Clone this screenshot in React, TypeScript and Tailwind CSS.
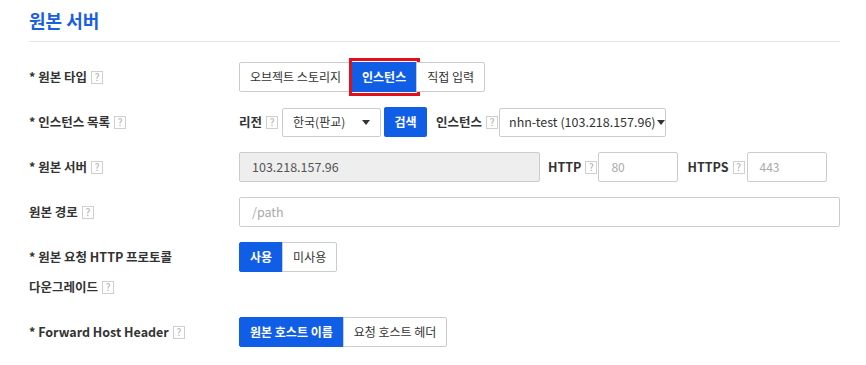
import React from "react";

const font = { fontFamily: '"Noto Sans CJK KR", "Noto Sans", sans-serif' };

function Help() {
  return (
    <span className="inline-flex items-center justify-center w-[12px] h-[13px] ml-[4px] border border-[#cfcfcf] text-[10px] leading-none text-[#aaa] font-normal bg-white">
      ?
    </span>
  );
}

function Label({ children, help = true }: { children: React.ReactNode; help?: boolean }) {
  return (
    <div className="flex items-center h-[30px] text-[12.5px] font-bold text-[#333] whitespace-nowrap">
      {children}
      {help && <Help />}
    </div>
  );
}

function Group({ items, active, outline }: { items: string[]; active: number; outline?: boolean }) {
  return (
    <div className="flex h-[30px]">
      {items.map((t, i) => (
        <div
          key={t}
          className={`relative flex items-center px-[10px] text-[12px] border whitespace-nowrap ${
            i === active
              ? "bg-[#115ee6] border-[#115ee6] text-white font-bold"
              : "bg-white border-[#ccc] text-[#333]"
          } ${i === 0 ? "rounded-l-[2px]" : "-ml-px"} ${i === items.length - 1 ? "rounded-r-[2px]" : ""}`}
        >
          {t}
          {outline && i === active && (
            <div className="absolute -top-[5px] -bottom-[5px] -left-[3px] -right-[4px] border-[3px] border-[#e3101c]" />
          )}
        </div>
      ))}
    </div>
  );
}

function Arrow() {
  return (
    <svg width="8" height="5" viewBox="0 0 8 5">
      <path d="M0 0H8L4 5Z" fill="#333" />
    </svg>
  );
}

export default function App() {
  return (
    <div className="w-[866px] h-[365px] bg-white pl-[29px] pr-[26px]" style={font}>
      <div className="h-[42px] pt-[6px] border-b border-[#e5e5e5]">
        <h2 className="text-[18px] font-bold text-[#1a5fe0] leading-[28px]">원본 서버</h2>
      </div>

      <div className="flex flex-col gap-[15px] pt-[20px]">
        <div className="flex">
          <div className="w-[210px]">
            <Label>* 원본 타입</Label>
          </div>
          <Group items={["오브젝트 스토리지", "인스턴스", "직접 입력"]} active={1} outline />
        </div>

        <div className="flex">
          <div className="w-[210px]">
            <Label>* 인스턴스 목록</Label>
          </div>
          <div className="flex items-center h-[30px]">
            <Label>리전</Label>
            <div className="ml-[4px] w-[99px] h-[29px] border border-[#ccc] rounded-[2px] flex items-center justify-between pl-[10px] pr-[10px] text-[12px] text-[#333]">
              한국(판교)
              <Arrow />
            </div>
            <div className="ml-[3px] w-[43px] h-[30px] bg-[#115ee6] rounded-[2px] text-white text-[12px] font-bold flex items-center justify-center">
              검색
            </div>
            <div className="ml-[9px]">
              <Label>인스턴스</Label>
            </div>
            <div className="ml-[1px] w-[167px] h-[29px] border border-[#ccc] rounded-[2px] flex items-center pl-[9px] text-[12.5px] text-[#333] whitespace-nowrap overflow-hidden">
              <span>nhn-test (103.218.157.96)</span>
              <span className="ml-[1px] flex">
                <Arrow />
              </span>
            </div>
          </div>
        </div>

        <div className="flex">
          <div className="w-[210px]">
            <Label>* 원본 서버</Label>
          </div>
          <div className="flex items-center h-[30px]">
            <div className="w-[301px] h-[30px] bg-[#eee] border border-[#ccc] rounded-[2px] flex items-center pl-[12px] text-[12.5px] text-[#555]">
              103.218.157.96
            </div>
            <div className="ml-[8px]">
              <Label>HTTP</Label>
            </div>
            <div className="ml-[1px] w-[80px] h-[30px] border border-[#ccc] rounded-[2px] flex items-center pl-[12px] text-[12px] text-[#aaa]">
              80
            </div>
            <div className="ml-[9px]">
              <Label>HTTPS</Label>
            </div>
            <div className="ml-[2px] w-[80px] h-[30px] border border-[#ccc] rounded-[2px] flex items-center pl-[12px] text-[12px] text-[#aaa]">
              443
            </div>
          </div>
        </div>

        <div className="flex">
          <div className="w-[210px]">
            <Label>원본 경로</Label>
          </div>
          <div className="flex-1 h-[30px] border border-[#ccc] rounded-[2px] flex items-center pl-[12px] text-[12.5px] text-[#aaa]">
            /path
          </div>
        </div>

        <div className="flex">
          <div className="w-[210px]">
            <Label help={false}>* 원본 요청 HTTP 프로토콜</Label>
            <Label>다운그레이드</Label>
          </div>
          <Group items={["사용", "미사용"]} active={0} />
        </div>

        <div className="flex">
          <div className="w-[210px]">
            <Label>* Forward Host Header</Label>
          </div>
          <Group items={["원본 호스트 이름", "요청 호스트 헤더"]} active={0} />
        </div>
      </div>
    </div>
  );
}
